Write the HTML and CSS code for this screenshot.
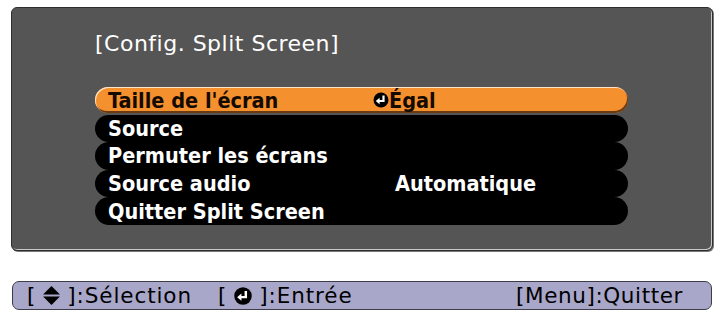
FILE: index.html
```html
<!DOCTYPE html>
<html lang="fr">
<head>
<meta charset="utf-8">
<link rel="stylesheet" href="styles.css">
</head>
<body>
<div class="panel">
  <div class="title">[Config. Split Screen]</div>
  <ul class="menu">
    <li class="row active">
      <span class="label">Taille de l'écran</span>
      <span class="value"><svg class="enter" viewBox="0 0 16 16" width="16" height="16"><circle cx="8" cy="8" r="7.5" fill="#000"/><path d="M10.5 3.5 V9 H5.5" fill="none" stroke="#fff" stroke-width="2.2"/><path d="M2.8 9 L6.6 5.8 L6.6 12.2 Z" fill="#fff"/></svg>Égal</span>
    </li>
    <li class="row"><span class="label">Source</span></li>
    <li class="row"><span class="label">Permuter les écrans</span></li>
    <li class="row"><span class="label">Source audio</span><span class="value indent">Automatique</span></li>
    <li class="row"><span class="label">Quitter Split Screen</span></li>
  </ul>
</div>
<div class="help">
  <span class="key">[<svg class="updown" viewBox="0 0 16 18" width="17" height="19"><path d="M8 0 L16 8 H0 Z" fill="#000"/><path d="M0 10 H16 L8 18 Z" fill="#000"/></svg>]:Sélection</span>
  <span class="key second">[<svg class="enter2" viewBox="0 0 16 16" width="18" height="18"><circle cx="8" cy="8" r="7.8" fill="#000"/><path d="M10.5 3.5 V9 H5.5" fill="none" stroke="#fff" stroke-width="2.2"/><path d="M2.8 9 L6.6 5.8 L6.6 12.2 Z" fill="#fff"/></svg>]:Entrée</span>
  <span class="key quit">[Menu]:Quitter</span>
</div>
</body>
</html>
```
FILE: styles.css
```css
html, body {
  margin: 0;
  padding: 0;
  background: #fff;
}
body {
  width: 720px;
  height: 314px;
  overflow: hidden;
  font-family: "DejaVu Sans", "Liberation Sans", sans-serif;
}
.panel {
  box-sizing: border-box;
  margin: 7px 0 0 11px;
  width: 702px;
  height: 244px;
  background: #555555;
  border: 1px solid #2e2e2e;
  border-radius: 6px;
  box-shadow: inset -1px -1px 0 #c8c8c8, 1px 1px 0 #777;
  padding: 23px 0 0 83px;
}
.title {
  color: #fff;
  font-size: 22px;
  line-height: 26px;
  letter-spacing: 0.5px;
}
.menu {
  list-style: none;
  margin: 30px 0 0 0;
  padding: 0;
  width: 533px;
}
.row {
  box-sizing: border-box;
  height: 27.6px;
  display: flex;
  align-items: center;
  background: #000;
  border-radius: 14px;
  padding-left: 13px;
  color: #fff;
  font-family: "DejaVu Sans Condensed", "DejaVu Sans", sans-serif;
  font-stretch: condensed;
  font-size: 21.5px;
  font-weight: bold;
}
.row.active {
  height: 26px;
  background: #f5902f;
  color: #150a00;
  box-shadow: inset 1px 1px 0 #fde3c8, inset -1px -2px 0 #6a3a12;
  margin-bottom: 1.6px;
}
.label {
  width: 265px;
  flex: none;
}
.value {
  display: flex;
  align-items: center;
}
.value.indent {
  padding-left: 22px;
}
.help {
  box-sizing: border-box;
  margin: 30px 0 0 12px;
  width: 700px;
  height: 29px;
  background: #a8a7c9;
  border: 1.5px solid #3d3d48;
  border-radius: 7px;
  display: flex;
  align-items: center;
  padding-left: 14px;
  font-size: 21.5px;
  color: #000;
  letter-spacing: 0.9px;
}
.key {
  display: flex;
  align-items: center;
}
.key svg {
  margin: 0 7px;
}
.second {
  margin-left: 26px;
}
.quit {
  margin-left: auto;
  margin-right: 28px;
  letter-spacing: 0.6px;
}
```
